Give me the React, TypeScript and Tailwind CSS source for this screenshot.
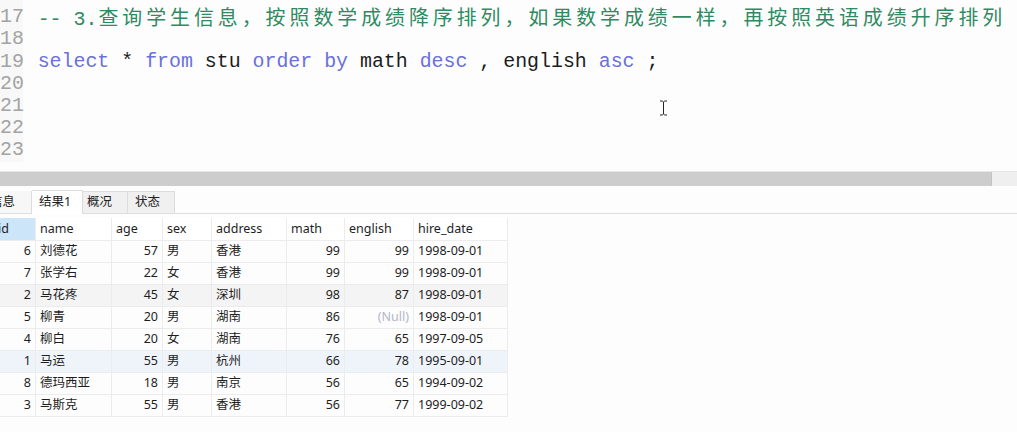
import React from 'react';

const mono = { fontFamily: '"Liberation Mono", "Noto Sans CJK SC", monospace' };

type Row = {
  id: number;
  name: string;
  age: number;
  sex: string;
  address: string;
  math: number;
  english: number | null;
  hire: string;
  bg?: string;
};

const rows: Row[] = [
  { id: 6, name: '刘德花', age: 57, sex: '男', address: '香港', math: 99, english: 99, hire: '1998-09-01' },
  { id: 7, name: '张学右', age: 22, sex: '女', address: '香港', math: 99, english: 99, hire: '1998-09-01' },
  { id: 2, name: '马花疼', age: 45, sex: '女', address: '深圳', math: 98, english: 87, hire: '1998-09-01', bg: 'bg-[#f4f4f4]' },
  { id: 5, name: '柳青', age: 20, sex: '男', address: '湖南', math: 86, english: null, hire: '1998-09-01' },
  { id: 4, name: '柳白', age: 20, sex: '女', address: '湖南', math: 76, english: 65, hire: '1997-09-05' },
  { id: 1, name: '马运', age: 55, sex: '男', address: '杭州', math: 66, english: 78, hire: '1995-09-01', bg: 'bg-[#eff4fa]' },
  { id: 8, name: '德玛西亚', age: 18, sex: '男', address: '南京', math: 56, english: 65, hire: '1994-09-02' },
  { id: 3, name: '马斯克', age: 55, sex: '男', address: '香港', math: 56, english: 77, hire: '1999-09-02' },
];

const cols = 'grid grid-cols-[36px_76px_51px_49px_75px_58px_69px_94px]';
const cell = 'h-[22px] flex items-center border-r border-b border-[#ececec] px-[4px] whitespace-nowrap overflow-hidden';

const Cjk: React.FC<{ children: React.ReactNode }> = ({ children }) => (
  <span className="tracking-[4px] pl-[1px]" style={{ fontFamily: '"Noto Sans CJK SC", sans-serif' }}>
    {children}
  </span>
);

const kw = 'text-[#6a70dc]';

const CodeLine: React.FC<{ n: number; children?: React.ReactNode }> = ({ n, children }) => (
  <div className="flex h-[22.2px] leading-[22.2px] whitespace-pre">
    <div className="w-[23px] shrink-0 text-right text-[#a3a3a3] bg-[#f8f8f8]">{n}</div>
    <div className="pl-[14.7px] text-[#1c1c1c]">{children}</div>
  </div>
);

export default function App() {
  return (
    <div
      className="relative w-[1017px] h-[432px] overflow-hidden bg-[#fdfdfd] flex flex-col"
      style={{ fontFamily: '"Noto Sans", "Noto Sans CJK SC", sans-serif' }}
    >
      {/* editor */}
      <div className="h-[171px] shrink-0 overflow-hidden text-[19.9px]" style={mono}>
        <div className="-mt-[16px] bg-[linear-gradient(to_right,#f8f8f8_23px,transparent_23px)]">
          <CodeLine n={16} />
          <CodeLine n={17}>
            <span className="text-[#2f8a62]">
              -- 3.<Cjk>查询学生信息，按照数学成绩降序排列，如果数学成绩一样，再按照英语成绩升序排列</Cjk>
            </span>
          </CodeLine>
          <CodeLine n={18} />
          <CodeLine n={19}>
            <span className={kw}>select</span> * <span className={kw}>from</span> stu{' '}
            <span className={kw}>order</span> <span className={kw}>by</span> math{' '}
            <span className={kw}>desc</span> , english <span className={kw}>asc</span> ;
          </CodeLine>
          <CodeLine n={20} />
          <CodeLine n={21} />
          <CodeLine n={22} />
          <CodeLine n={23} />
        </div>
      </div>

      {/* horizontal scrollbar */}
      <div className="h-[15px] shrink-0 flex border-t border-[#e6e6e6]">
        <div className="flex-1 bg-[#cdcdcd] border-r border-[#c4c4c4]" />
        <div className="w-[25px] bg-[#efefef]" />
      </div>

      {/* tabs */}
      <div className="mt-[4px] h-[24px] shrink-0 flex items-end border-b border-[#dedede] text-[12.5px] text-[#222]">
        <div className="w-[32px] h-[22px] flex items-center border-r border-[#dcdcdc] bg-[#f7f7f7] overflow-hidden">
          <span className="-ml-[10px]">信息</span>
        </div>
        <div className="w-[51px] h-[24px] flex items-center pl-[7px] bg-white border-r border-t border-[#dcdcdc] -mb-px">
          结果1
        </div>
        <div className="w-[45px] h-[22px] flex items-center pl-[4px] bg-[#f0f0f0] border-r border-t border-[#dcdcdc]">
          概况
        </div>
        <div className="w-[47px] h-[22px] flex items-center pl-[7px] bg-[#f0f0f0] border-r border-t border-[#dcdcdc]">
          状态
        </div>
      </div>

      {/* result grid */}
      <div className="mt-[4px] w-[508px] text-[12.5px] text-[#1e1e1e]">
        <div className={cols}>
          <div className={`${cell} h-[23px] bg-[#cde5f8]`}>
            <span className="-ml-[6px]">id</span>
          </div>
          {['name', 'age', 'sex', 'address', 'math', 'english', 'hire_date'].map((h) => (
            <div key={h} className={`${cell} h-[23px] bg-white`}>
              {h}
            </div>
          ))}
        </div>
        {rows.map((r) => (
          <div key={r.id} className={`${cols} ${r.bg ?? 'bg-[#fdfdfd]'}`}>
            <div className={`${cell} justify-end`}>{r.id}</div>
            <div className={cell}>{r.name}</div>
            <div className={`${cell} justify-end`}>{r.age}</div>
            <div className={cell}>{r.sex}</div>
            <div className={cell}>{r.address}</div>
            <div className={`${cell} justify-end`}>{r.math}</div>
            <div className={`${cell} justify-end`}>
              {r.english === null ? <span className="text-[#b4b6c8]">(Null)</span> : r.english}
            </div>
            <div className={cell}>{r.hire}</div>
          </div>
        ))}
      </div>

      {/* text cursor */}
      <svg className="absolute left-[659px] top-[100px]" width="9" height="16" viewBox="0 0 9 16">
        <path d="M1 1h2.5M5.5 1H8M4.5 1.5v13M1 15h2.5M5.5 15H8M3.5 1.5l1 1 1-1M3.5 14.5l1-1 1 1" stroke="#222" strokeWidth="1" fill="none" />
      </svg>
    </div>
  );
}
